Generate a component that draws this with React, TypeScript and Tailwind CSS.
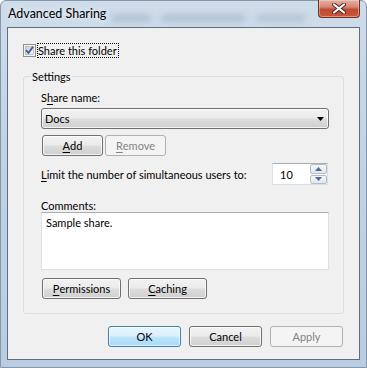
import React from "react";

const btnBase =
  "h-[21px] rounded-[3px] border flex items-center justify-center text-[11px] leading-[15px]";
const btnNormal =
  "border-[#707070] bg-[linear-gradient(180deg,#f2f2f2_0%,#ebebeb_48%,#dddddd_52%,#cfcfcf_100%)] shadow-[inset_0_0_0_1px_rgba(255,255,255,0.75)] text-black";
const btnDefault =
  "border-[#3c7fb1] bg-[linear-gradient(180deg,#eaf6fd_0%,#d9f0fc_48%,#bee6fd_52%,#a7d9f5_100%)] shadow-[inset_0_0_0_1px_rgba(255,255,255,0.7)] text-black";
const btnDisabled = "border-[#adb2b5] bg-[#f4f4f4] text-[#838383]";

function U({ children }: { children: React.ReactNode }) {
  return <span className="underline decoration-1 underline-offset-[2px]">{children}</span>;
}

function CheckBox() {
  return (
    <svg width="13" height="13" viewBox="0 0 13 13" className="shrink-0">
      <rect x="0.5" y="0.5" width="12" height="12" fill="#f4f4f4" stroke="#8e8f8f" />
      <defs>
        <linearGradient id="cbg" x1="0" y1="0" x2="1" y2="1">
          <stop offset="0" stopColor="#cbcfd5" />
          <stop offset="1" stopColor="#f7f7f7" />
        </linearGradient>
      </defs>
      <rect x="2.5" y="2.5" width="8" height="8" fill="url(#cbg)" stroke="#a6a6a6" strokeWidth="0.6" />
      <path d="M3 6.2 L5.4 9 L10 2.8" fill="none" stroke="#3a5a9e" strokeWidth="1.8" strokeLinejoin="round" />
    </svg>
  );
}

export default function App() {
  return (
    <div className="w-[367px] h-[368px] overflow-hidden font-[Lato,'Liberation_Sans',sans-serif]">
      <div className="w-[367px] h-[368px] flex flex-col rounded-t-[6px] border border-[#8797ab] bg-[linear-gradient(180deg,#cfdcea_0%,#c2d3e5_40%,#b9cce1_100%)] relative">
        {/* blurred background glass smudges */}
        <div className="absolute left-[110px] top-[13px] w-[40px] h-[8px] rounded-full bg-[#8d9fb3] opacity-40 blur-[3px]" />
        <div className="absolute left-[160px] top-[13px] w-[85px] h-[8px] rounded-full bg-[#8d9fb3] opacity-40 blur-[3px]" />
        <div className="absolute left-[255px] top-[13px] w-[50px] h-[8px] rounded-full bg-[#8d9fb3] opacity-35 blur-[3px]" />

        {/* title bar */}
        <div className="h-[26px] relative flex items-start">
          <div className="pl-[7px] pt-[5px] text-[12.5px] leading-[15px] text-black [text-shadow:0_0_6px_rgba(255,255,255,0.95)] relative">
            Advanced Sharing
          </div>
          <div className="absolute right-[6px] -top-[1px] w-[42px] h-[18px] rounded-b-[4px] border border-t-0 border-[#6d2f25] bg-[linear-gradient(180deg,#e6aea1_0%,#d68a78_40%,#c24a32_55%,#c8553b_100%)] shadow-[inset_0_0_0_1px_rgba(255,220,210,0.45)] flex items-center justify-center">
            <svg width="14" height="11" viewBox="0 0 14 11">
              <path d="M2 1.5 L12 9.5 M12 1.5 L2 9.5" stroke="#4b2520" strokeWidth="4" strokeLinecap="round" />
              <path d="M2 1.5 L12 9.5 M12 1.5 L2 9.5" stroke="#ffffff" strokeWidth="2.2" strokeLinecap="round" />
            </svg>
          </div>
        </div>

        {/* client area */}
        <div className="ml-[6px] w-[353px] h-[333px] border border-[#5f6e80] bg-[#f0f0f0] flex flex-col text-[11px] leading-[15px] text-black">
          {/* share this folder */}
          <div className="mt-[15px] ml-[15px] h-[15px] flex items-center">
            <CheckBox />
            <div className="ml-[1px] h-[15px] border border-dotted border-black flex items-center leading-[13px] whitespace-nowrap pr-[1px]">
              Share this folder
            </div>
          </div>

          {/* settings group */}
          <div className="mt-[18px] ml-[15px] w-[321px] h-[238px] rounded-[3px] border border-[#d5dfe5] relative flex flex-col pl-[17px] pt-[13px]">
            <div className="absolute -top-[8px] left-[7px] px-[1px] bg-[#f0f0f0] leading-[15px]">Settings</div>

            <div className="h-[15px]">
              S<U>h</U>are name:
            </div>

            <div className="mt-[3px] w-[288px] h-[21px] rounded-[3px] border border-[#707070] bg-[linear-gradient(180deg,#f2f2f2_0%,#ebebeb_48%,#dddddd_52%,#cfcfcf_100%)] shadow-[inset_0_0_0_1px_rgba(255,255,255,0.75)] flex items-center justify-between pl-[3px] pr-[4px]">
              <span>Docs</span>
              <svg width="7" height="4" viewBox="0 0 7 4">
                <path d="M0 0 H7 L3.5 4 Z" fill="#000" />
              </svg>
            </div>

            <div className="mt-[6px] ml-[1px] flex gap-[2px]">
              <div className={`${btnBase} ${btnNormal} w-[61px]`}>
                <U>A</U>dd
              </div>
              <div className={`${btnBase} ${btnDisabled} w-[61px]`}>
                <U>R</U>emove
              </div>
            </div>

            <div className="mt-[7px] w-[287px] h-[22px] flex items-center justify-between">
              <span>
                <U>L</U>imit the number of simultaneous users to:
              </span>
              <div className="w-[56px] h-[22px] border border-[#dbdfe6] border-t-[#abadb3] bg-white flex items-stretch">
                <div className="flex-1 pl-[7px] flex items-center">10</div>
                <div className="w-[17px] flex flex-col gap-[1px]">
                  <div className="flex-1 rounded-[2px] border border-[#b6bcc6] bg-[linear-gradient(180deg,#f6f7f9_0%,#e4e7ec_100%)] flex items-center justify-center">
                    <svg width="7" height="4" viewBox="0 0 7 4">
                      <path d="M0 4 H7 L3.5 0 Z" fill="#4e6a97" />
                    </svg>
                  </div>
                  <div className="flex-1 rounded-[2px] border border-[#b6bcc6] bg-[linear-gradient(180deg,#f6f7f9_0%,#e4e7ec_100%)] flex items-center justify-center">
                    <svg width="7" height="4" viewBox="0 0 7 4">
                      <path d="M0 0 H7 L3.5 4 Z" fill="#4e6a97" />
                    </svg>
                  </div>
                </div>
              </div>
            </div>

            <div className="mt-[15px] h-[12px] leading-[12px]">
              C<U>o</U>mments:
            </div>
            <div className="w-[288px] h-[58px] border border-[#dbdfe6] border-t-[#abadb3] bg-white pl-[4px] pt-[2px]">
              Sample share.
            </div>

            <div className="mt-[8px] ml-[1px] flex gap-[7px]">
              <div className={`${btnBase} ${btnNormal} w-[79px]`}>
                <U>P</U>ermissions
              </div>
              <div className={`${btnBase} ${btnNormal} w-[79px]`}>
                <U>C</U>aching
              </div>
            </div>
          </div>

          {/* bottom buttons */}
          <div className="mt-[12px] flex justify-end pr-[16px] gap-[8px]">
            <div className={`${btnBase} ${btnDefault} w-[73px]`}>OK</div>
            <div className={`${btnBase} ${btnNormal} w-[73px]`}>Cancel</div>
            <div className={`${btnBase} ${btnDisabled} w-[73px]`}>Apply</div>
          </div>
        </div>
      </div>
    </div>
  );
}
